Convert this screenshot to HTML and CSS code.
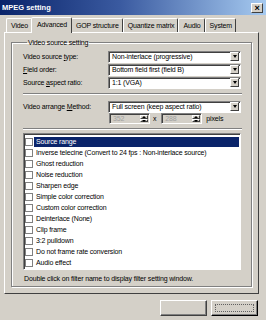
FILE: index.html
```html
<!DOCTYPE html>
<html>
<head>
<meta charset="utf-8">
<link rel="stylesheet" href="styles.css">
</head>
<body>
<div class="window">
  <div class="titlebar">
    <span class="title">MPEG setting</span>
    <span class="close">×</span>
  </div>
  <div class="tabs">
    <div class="tab">Video</div>
    <div class="tab active">Advanced</div>
    <div class="tab">GOP structure</div>
    <div class="tab">Quantize matrix</div>
    <div class="tab">Audio</div>
    <div class="tab">System</div>
  </div>
  <div class="panel">
    <fieldset class="group">
      <legend>Video source setting</legend>
      <div class="row">
        <span class="label">Video source <u>t</u>ype:</span>
        <div class="combo"><span class="val">Non-interlace (progressive)</span><span class="drop"><i></i></span></div>
      </div>
      <div class="row">
        <span class="label"><u>F</u>ield order:</span>
        <div class="combo"><span class="val">Bottom field first (field B)</span><span class="drop"><i></i></span></div>
      </div>
      <div class="row">
        <span class="label">Source <u>a</u>spect ratio:</span>
        <div class="combo"><span class="val">1:1 (VGA)</span><span class="drop"><i></i></span></div>
      </div>
      <div class="sep"></div>
      <div class="row">
        <span class="label">Video arrange <u>M</u>ethod:</span>
        <div class="combo"><span class="val">Full screen (keep aspect ratio)</span><span class="drop"><i></i></span></div>
      </div>
      <div class="spinrow">
        <div class="spin"><span class="val">352</span><span class="arrows"><i class="up"></i><i class="down"></i></span></div>
        <span class="times">x</span>
        <div class="spin"><span class="val">288</span><span class="arrows"><i class="up"></i><i class="down"></i></span></div>
        <span class="pixels">pixels</span>
      </div>
      <div class="sep sep-list"></div>
      <div class="list">
        <div class="item sel"><span class="cb"></span><span class="txt">Source range</span></div>
        <div class="item"><span class="cb"></span><span class="txt">Inverse telecine (Convert to 24 fps : Non-interlace source)</span></div>
        <div class="item"><span class="cb"></span><span class="txt">Ghost reduction</span></div>
        <div class="item"><span class="cb"></span><span class="txt">Noise reduction</span></div>
        <div class="item"><span class="cb"></span><span class="txt">Sharpen edge</span></div>
        <div class="item"><span class="cb"></span><span class="txt">Simple color correction</span></div>
        <div class="item"><span class="cb"></span><span class="txt">Custom color correction</span></div>
        <div class="item"><span class="cb"></span><span class="txt">Deinterlace (None)</span></div>
        <div class="item"><span class="cb"></span><span class="txt">Clip frame</span></div>
        <div class="item"><span class="cb"></span><span class="txt">3:2 pulldown</span></div>
        <div class="item"><span class="cb"></span><span class="txt">Do not frame rate conversion</span></div>
        <div class="item"><span class="cb"></span><span class="txt">Audio effect</span></div>
      </div>
      <div class="hint">Double click on filter name to display filter setting window.</div>
    </fieldset>
  </div>
  <div class="buttons">
    <div class="button"></div>
    <div class="button focus"><span class="focusrect"></span></div>
  </div>
</div>
</body>
</html>
```

FILE: styles.css
```css
* { box-sizing: border-box; }
html, body { margin: 0; padding: 0; }
body {
  width: 266px;
  height: 320px;
  overflow: hidden;
  background: #d4d0c8;
  font-family: "Liberation Sans", Arial, sans-serif;
  font-size: 7px;
  letter-spacing: -0.15px;
  color: #000;
}
.window {
  width: 266px;
  height: 320px;
  display: flex;
  flex-direction: column;
}
.titlebar {
  height: 15px;
  flex: none;
  background: linear-gradient(to right, #0a246a 0%, #3a5aa0 45%, #a6caf0 100%);
  display: flex;
  align-items: center;
  justify-content: space-between;
  padding: 0 3px 0 2px;
}
.title {
  color: #fff;
  font-weight: bold;
  font-size: 7.5px;
  letter-spacing: 0;
}
.close {
  width: 12px;
  height: 10px;
  background: #d4d0c8;
  border: 1px solid;
  border-color: #fff #404040 #404040 #fff;
  font-size: 9px;
  line-height: 8px;
  text-align: center;
  font-weight: bold;
}
.tabs {
  display: flex;
  align-items: flex-end;
  height: 15px;
  flex: none;
  padding-left: 6px;
  margin-top: 2px;
}
.tab {
  height: 14px;
  padding: 0 3px 0 4px;
  line-height: 13px;
  border: 1px solid;
  border-bottom: none;
  border-color: #fff #404040 transparent #fff;
  border-radius: 2px 2px 0 0;
  position: relative;
}
.tab.active {
  height: 16px;
  line-height: 13px;
  margin: 0 -1px -1px -1px;
  padding: 0 4px 0 5px;
  background: #d4d0c8;
  z-index: 2;
}
.panel {
  margin: 0 7px 0 4px;
  height: 262px;
  flex: none;
  border: 1px solid;
  border-color: #fff #404040 #404040 #fff;
  padding: 5px 6px 0 6px;
}
.group {
  margin: 0;
  padding: 3px 9px 0 11px;
  height: 249px;
  border: 1px solid #808080;
  box-shadow: inset 1px 1px 0 #fff, 1px 1px 0 #fff;
}
.group legend {
  padding: 0 1px;
  margin-left: 4px;
  line-height: 9px;
}
.row {
  display: flex;
  align-items: center;
  height: 13px;
}
.label {
  width: 85px;
}
.combo {
  width: 133px;
  height: 12px;
  background: #fff;
  border: 1px solid;
  border-color: #808080 #fff #fff #808080;
  box-shadow: inset 1px 1px 0 #404040;
  display: flex;
  align-items: center;
  justify-content: space-between;
  padding: 1px 1px 1px 3px;
}
.drop {
  width: 9px;
  height: 9px;
  background: #d4d0c8;
  border: 1px solid;
  border-color: #fff #404040 #404040 #fff;
  display: flex;
  align-items: center;
  justify-content: center;
}
.drop i {
  width: 0; height: 0;
  border-left: 2.5px solid transparent;
  border-right: 2.5px solid transparent;
  border-top: 3px solid #000;
}
.sep {
  height: 2px;
  border-top: 1px solid #808080;
  border-bottom: 1px solid #fff;
  margin: 4px 0 5px 0;
}
.sep.sep-list {
  margin: 4px 0 3px 0;
}
.spinrow {
  display: flex;
  align-items: center;
  height: 11px;
  padding-left: 86px;
}
.spin {
  width: 41px;
  height: 11px;
  background: #d4d0c8;
  border: 1px solid;
  border-color: #808080 #fff #fff #808080;
  box-shadow: inset 1px 1px 0 #404040;
  display: flex;
  justify-content: space-between;
  padding: 1px 1px 1px 3px;
  color: #a0a0a0;
}
.spin .val { line-height: 8px; }
.arrows {
  width: 8px;
  display: flex;
  flex-direction: column;
}
.arrows i {
  flex: 1;
  background: #d4d0c8;
  border: 1px solid;
  border-color: #fff #404040 #404040 #fff;
  position: relative;
}
.arrows i::after {
  content: "";
  position: absolute;
  left: 1px; top: 0;
  border-left: 2px solid transparent;
  border-right: 2px solid transparent;
}
.arrows .up::after { border-bottom: 2px solid #000; }
.arrows .down::after { border-top: 2px solid #000; }
.times { margin: 0 5px 0 3px; }
.pixels { margin-left: 4px; }
.list {
  width: 218px;
  height: 137px;
  background: #fff;
  border: 1px solid;
  border-color: #808080 #fff #fff #808080;
  box-shadow: inset 1px 1px 0 #404040;
  padding: 2px 1px 0 1px;
}
.item {
  display: flex;
  align-items: center;
  height: 11px;
}
.cb {
  width: 8px;
  height: 8px;
  border: 1px solid #808080;
  background: #fff;
  flex: none;
  margin-right: 1px;
}
.txt {
  flex: 1;
  height: 10px;
  line-height: 10px;
  padding-left: 2px;
}
.item.sel .txt {
  background: #0a246a;
  color: #fff;
}
.hint {
  margin: 5px 0 0 1px;
}
.buttons {
  display: flex;
  justify-content: flex-end;
  gap: 4px;
  padding: 6px 8px 0 0;
}
.button {
  width: 47px;
  height: 16px;
  background: #d4d0c8;
  border: 1px solid;
  border-color: #fff #404040 #404040 #fff;
  box-shadow: inset -1px -1px 0 #808080;
}
.button.focus {
  border-color: #fff #000 #000 #fff;
  padding: 3px;
}
.focusrect {
  display: block;
  height: 100%;
  border: 1px dotted #606060;
}
```
